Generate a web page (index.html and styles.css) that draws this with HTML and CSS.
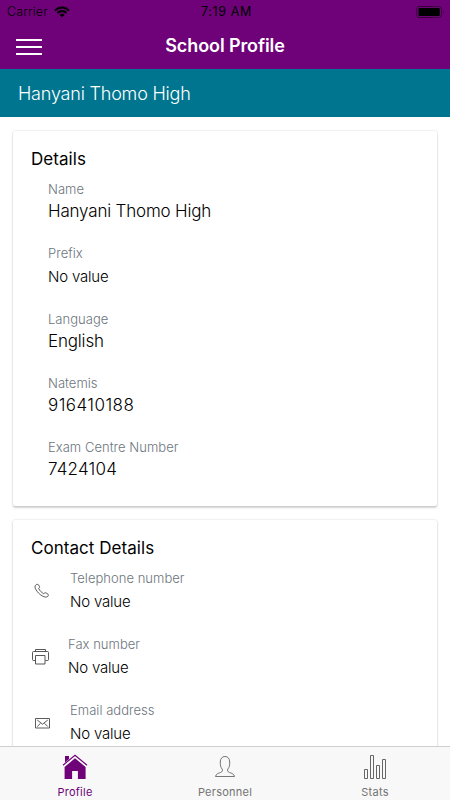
FILE: index.html
```html
<!DOCTYPE html>
<html lang="en">
<head>
<meta charset="utf-8">
<title>School Profile</title>
<link rel="stylesheet" href="styles.css">
</head>
<body>
<div class="app">
  <header class="header">
    <div class="status">
      <div class="carrier"><span>Carrier</span>
        <svg width="16" height="12" viewBox="0 0 16 12" fill="none" stroke="#000" stroke-width="2.1"><path d="M1 4.6C5 .4 11 .4 15 4.6M3.4 7.1C6 4.4 10 4.4 12.6 7.1"/><path d="M8 11.2L5.4 8.7C6.8 7.3 9.2 7.3 10.6 8.7Z" fill="#000" stroke="none"/></svg>
      </div>
      <span class="time">7:19 AM</span>
      <svg class="battery" width="29" height="12" viewBox="0 0 29 12"><rect x=".7" y=".5" width="24.8" height="11" rx="2.5" fill="none" stroke="#000" stroke-opacity=".5"/><rect x="2.5" y="2" width="21.3" height="8" rx="1"/><path d="M27 4q1.5 2 0 4z" fill-opacity=".6"/></svg>
    </div>
    <div class="nav">
      <div class="menu"><i></i><i></i><i></i></div>
      <h1>School Profile</h1>
    </div>
  </header>
  <div class="banner"><span>Hanyani Thomo High</span></div>
  <main class="content">
    <section class="card details">
      <h2 class="t-details">Details</h2>
      <div class="fields">
        <div class="field"><label>Name</label><p>Hanyani Thomo High</p></div>
        <div class="field empty"><label>Prefix</label><p>No value</p></div>
        <div class="field"><label>Language</label><p>English</p></div>
        <div class="field"><label>Natemis</label><p class="num">916410188</p></div>
        <div class="field"><label>Exam Centre Number</label><p class="num short">7424104</p></div>
      </div>
    </section>
    <section class="card contact">
      <h2>Contact Details</h2>
      <div class="row">
        <svg class="phone" width="16" height="16" viewBox="0 0 16 16" fill="none" stroke="#333" stroke-width=".8"><path d="M1.5 2.3C2.5 1 4 1 4.8 2.2C6 4 5.5 4.7 4.7 5.5C5.7 7.7 7.6 9.5 9.8 10.8C10.8 9.6 11.7 9.5 13.1 10.5C14.7 11.6 14.8 12.3 13.8 13.3C12.6 14.5 10.6 14.3 8 12.8C5.4 11.2 3.3 9 1.8 6.4C.8 4.6.8 3.2 1.5 2.3Z"/></svg>
        <div class="field empty"><label>Telephone number</label><p>No value</p></div>
      </div>
      <div class="row fax">
        <svg class="printer" width="17" height="16" viewBox="0 0 17 16" fill="none" stroke="#444" stroke-width=".9"><path d="M3.5 2.5V.5h10v2M3.5 11.5h-2a1 1 0 0 1-1-1v-7a1 1 0 0 1 1-1h14a1 1 0 0 1 1 1v7a1 1 0 0 1-1 1h-2"/><path d="M3.5 6.5h9.5v8.5H3.5z"/></svg>
        <div class="field empty"><label>Fax number</label><p>No value</p></div>
      </div>
      <div class="row">
        <svg class="mail" width="16" height="11" viewBox="0 0 16 11" fill="none" stroke="#333" stroke-width=".8"><path d="M.5.5h14v9.5H.5zM2.2 2l5.3 4.2L12.8 2M2.2 8.6l3.3-3.3M12.8 8.6L9.5 5.3"/></svg>
        <div class="field empty"><label>Email address</label><p>No value</p></div>
      </div>
    </section>
  </main>
  <nav class="tabs">
    <div class="tab active">
      <svg width="26" height="26" viewBox="0 0 26 26" fill="#6f0279"><path d="M3 2h4v3L3 8.4z"/><path d="M13 4.3L23.6 13V25H15.9V17H10.1V25H2.6V13z"/><path d="M1.6 12.3L13 2.9l11.4 9.4" fill="none" stroke="#f8f8f8" stroke-width="1"/><path d="M1 11.2L13 1.2l12 10" fill="none" stroke="#6f0279" stroke-width="1.2"/></svg>
      <span>Profile</span>
    </div>
    <div class="tab">
      <svg width="26" height="26" viewBox="0 0 26 26" fill="none" stroke="#666" stroke-width=".9"><path d="M3.5 22.5C4 20 6 19.4 8.5 18.5C10.7 17.6 10.7 16.5 10.2 15.2C8.6 13 8.2 11.5 8.3 8C8.4 4.5 10 2.5 13 2.5S17.6 4.5 17.7 8C17.8 11.5 17.4 13 15.8 15.2C15.3 16.5 15.3 17.6 17.5 18.5C20 19.4 22 20 22.5 22.5Z"/></svg>
      <span>Personnel</span>
    </div>
    <div class="tab">
      <svg width="26" height="26" viewBox="0 0 26 26" fill="none" stroke="#666" stroke-width="1"><path d="M2.5 15.5h3v9h-3zM8.5 1.5h3v23h-3zM14.5 11.5h3v13h-3zM20.5 5.5h3v19h-3z"/></svg>
      <span>Stats</span>
    </div>
  </nav>
</div>
</body>
</html>
```
FILE: styles.css
```css
* { box-sizing: border-box; }
body { margin: 0; font-family: Inter, "Liberation Sans", sans-serif; color: #000; background: #fff; }
h1, h2, p { margin: 0; }
svg { display: block; flex: none; }
.app { width: 450px; height: 800px; display: flex; flex-direction: column; overflow: hidden; }
.header { height: 69px; flex: none; background: #6f0279; }
.status { height: 23px; display: grid; grid-template-columns: 1fr auto 1fr; align-items: center; padding: 0 5px 0 7px; font-size: 12.5px; line-height: 23px; }
.carrier { display: flex; gap: 6px; align-items: center; font-weight: 300; letter-spacing: .15px; }
.time { letter-spacing: .65px; padding-left: 1px; }
.battery { justify-self: end; }
.nav { height: 46px; display: grid; grid-template-columns: 26px 1fr 26px; align-items: center; padding: 0 16px; }
.menu { display: flex; flex-direction: column; gap: 5px; padding-top: 1px; }
.menu i { height: 2px; background: #fff; }
h1 { font-size: 18px; font-weight: 600; color: #fff; text-align: center; line-height: 22px; letter-spacing: -.1px; }
.banner { height: 48px; flex: none; background: #00758f; color: #fff; padding: 0 18px; font-size: 18px; line-height: 49px; font-weight: 300; letter-spacing: -.2px; }
.content { flex: 1; min-height: 0; overflow: hidden; padding: 14px 13px 0; display: flex; flex-direction: column; gap: 14px; }
.card { flex: none; background: #fff; border-radius: 2px; box-shadow: 0 2px 2px rgba(0,0,0,.16), 0 0 2px rgba(0,0,0,.2); padding-left: 18px; }
.details { height: 375px; padding-top: 16px; }
.contact { height: 300px; padding-top: 16px; }
h2 { font-size: 17px; font-weight: 400; line-height: 24px; letter-spacing: .05px; }
.fields { padding: 10px 0 0 17px; }
.field { height: 64px; }
.field.empty { height: 66px; }
label { display: block; font-size: 13px; line-height: 16px; font-weight: 300; color: #6c757d; letter-spacing: .03px; }
.field p { font-size: 17px; line-height: 28px; font-weight: 350; letter-spacing: -.18px; }
.field .num { letter-spacing: .45px; }
.field .short { letter-spacing: .2px; }
.field.empty p { font-size: 15px; line-height: 31px; font-weight: 350; letter-spacing: -.2px; }
.contact h2 { margin-bottom: 10px; }
.row { display: grid; grid-template-columns: 39px 1fr; }
.row.fax { grid-template-columns: 37px 1fr; }
.phone { margin: 13px 0 0 3px; }
.printer { margin: 13px 0 0 1px; }
.mail { margin: 16px 0 0 4px; }
.tabs { height: 54px; flex: none; display: grid; grid-template-columns: repeat(3, 1fr); background: #f8f8f8; border-top: 1px solid #cfcfcf; }
.tab { display: flex; flex-direction: column; align-items: center; padding-top: 7px; color: #737373; font-size: 11px; line-height: 14px; gap: 5px; letter-spacing: .25px; }
.active { color: #6f0279; }
```
